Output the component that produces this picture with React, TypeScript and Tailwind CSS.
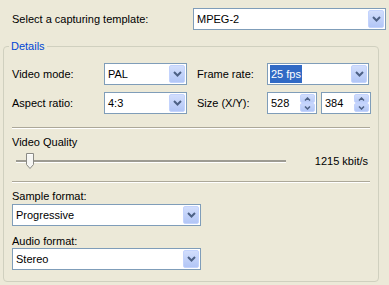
import React from 'react';

const font = { fontFamily: '"Liberation Sans", Arial, sans-serif' };

function Chevron() {
    return (
        <svg width="9" height="6" viewBox="0 0 9 6">
            <path d="M1 1 L4.5 4.5 L8 1" fill="none" stroke="#4D6185" strokeWidth="2" />
        </svg>
    );
}

function DropButton() {
    return (
        <div className="w-[16px] h-[18px] mr-[1px] rounded-[2px] border border-[#C3D3FD] bg-gradient-to-b from-[#D2DEFC] to-[#B2C6F6] flex items-center justify-center">
            <Chevron />
        </div>
    );
}

function Combo({ value, width, selected }: { value: string; width: string; selected?: boolean }) {
    return (
        <div className={`${width} h-[22px] border border-[#7F9DB9] bg-white flex items-center`}>
            <div className="flex-1 pl-[1px] flex items-center h-full">
                {selected ? (
                    <span className="bg-[#316AC5] text-white h-[18px] leading-[18px] px-[1px] ml-[1px]">{value}</span>
                ) : (
                    <span className="pl-[2px]">{value}</span>
                )}
            </div>
            <DropButton />
        </div>
    );
}

function Spin({ value }: { value: string }) {
    return (
        <div className="w-[50px] h-[22px] border border-[#7F9DB9] bg-white flex items-center">
            <span className="flex-1 pl-[3px]">{value}</span>
            <div className="w-[15px] h-[18px] mr-[1px] flex flex-col gap-[0px]">
                <div className="h-[9px] rounded-[2px] border border-[#C3D3FD] bg-gradient-to-b from-[#D2DEFC] to-[#B9CBF7] flex items-center justify-center">
                    <svg width="7" height="4" viewBox="0 0 7 4">
                        <path d="M1 3.5 L3.5 1 L6 3.5" fill="none" stroke="#4D6185" strokeWidth="1.5" />
                    </svg>
                </div>
                <div className="h-[9px] rounded-[2px] border border-[#C3D3FD] bg-gradient-to-b from-[#C9D7FB] to-[#B2C6F6] flex items-center justify-center">
                    <svg width="7" height="4" viewBox="0 0 7 4">
                        <path d="M1 0.5 L3.5 3 L6 0.5" fill="none" stroke="#4D6185" strokeWidth="1.5" />
                    </svg>
                </div>
            </div>
        </div>
    );
}

function Separator() {
    return <div className="w-[358px] h-[2px] border-t border-[#ACA899] border-b border-b-white" />;
}

export default function App() {
    return (
        <div className="w-[389px] h-[285px] bg-[#ECE9D8] text-[11px] leading-[13px] text-black overflow-hidden" style={font}>
            {/* Template row */}
            <div className="pt-[8px] flex items-center">
                <span className="pl-[12px] w-[193px]">Select a capturing template:</span>
                <Combo value="MPEG-2" width="w-[193px]" />
            </div>

            {/* Details group */}
            <div className="relative mt-[16px] ml-[3px] w-[376px] h-[236px] border border-[#D0D0BF] rounded-[4px]">
                <span className="absolute left-[5px] top-[-8px] px-[2px] bg-[#ECE9D8] text-[#0046D5] leading-[14px]">Details</span>

                <div className="pl-[8px] pt-[16px] flex flex-col">
                    <div className="flex items-center h-[22px]">
                        <span className="w-[92px]">Video mode:</span>
                        <Combo value="PAL" width="w-[83px]" />
                        <span className="ml-[10px] w-[70px]">Frame rate:</span>
                        <Combo value="25 fps" width="w-[102px]" selected />
                    </div>
                    <div className="flex items-center h-[22px] mt-[7px]">
                        <span className="w-[92px]">Aspect ratio:</span>
                        <Combo value="4:3" width="w-[83px]" />
                        <span className="ml-[10px] w-[70px]">Size (X/Y):</span>
                        <Spin value="528" />
                        <div className="ml-[4px]">
                            <Spin value="384" />
                        </div>
                    </div>

                    <div className="mt-[13px]">
                        <Separator />
                    </div>

                    <span className="mt-[7px]">Video Quality</span>
                    <div className="mt-[4px] w-[358px] h-[16px] flex items-center">
                        <div className="relative ml-[4px] w-[270px] h-[3px] bg-[#9D9B92] border-b border-white">
                            <svg className="absolute left-[10px] top-[-7px]" width="8" height="16" viewBox="0 0 8 16">
                                <path d="M0.5 0.5 H7.5 V11.5 L4 15.5 L0.5 11.5 Z" fill="#F6F6F3" stroke="#8A8A85" />
                                <path d="M1.5 1.5 H6.5" stroke="#FFFFFF" />
                            </svg>
                        </div>
                        <span className="ml-auto mr-[2px]">1215 kbit/s</span>
                    </div>

                    <div className="mt-[12px]">
                        <Separator />
                    </div>

                    <span className="mt-[7px]">Sample format:</span>
                    <div className="mt-[1px]">
                        <Combo value="Progressive" width="w-[189px]" />
                    </div>
                    <span className="mt-[9px]">Audio format:</span>
                    <div className="mt-[0px]">
                        <Combo value="Stereo" width="w-[189px]" />
                    </div>
                </div>
            </div>
        </div>
    );
}
